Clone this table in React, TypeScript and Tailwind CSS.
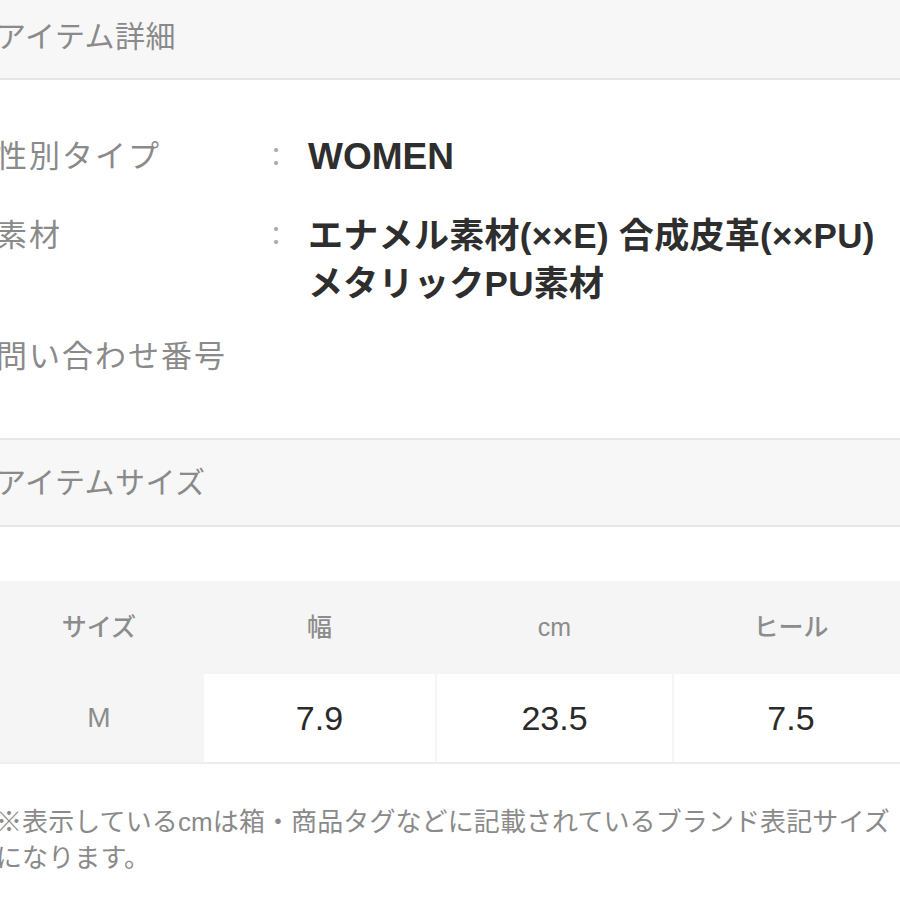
import React from "react";

const font = { fontFamily: '"Liberation Sans", "Noto Sans CJK JP", sans-serif' };

export default function App() {
  return (
    <div className="w-[900px] h-[900px] overflow-hidden bg-white" style={font}>
      <div className="-ml-[4px] w-[912px]">
        {/* Header 1 */}
        <div className="h-[80px] bg-[#f7f7f7] border-b-2 border-[#e6e6e6] flex items-center pb-[4px]">
          <span className="text-[30px] text-[#8a8a8a] leading-none tracking-[0.5px]">アイテム詳細</span>
        </div>

        {/* Detail rows */}
        <div className="pt-[53px] pb-[57px]">
          <div className="flex leading-[48px]">
            <div className="w-[264px] text-[31px] text-[#8a8a8a] tracking-[2px]">性別タイプ</div>
            <div className="w-[32px] text-[26px] text-[#aaaaaa] text-center">：</div>
            <div className="ml-[16px] text-[37px] font-semibold text-[#2e2e2e]">WOMEN</div>
          </div>
          <div className="flex leading-[48px] mt-[31px]">
            <div className="w-[264px] text-[31px] text-[#8a8a8a] tracking-[2px]">素材</div>
            <div className="w-[32px] text-[26px] text-[#aaaaaa] text-center">：</div>
            <div className="ml-[16px] text-[35px] font-semibold text-[#2e2e2e] whitespace-nowrap tracking-[0.3px]">
              エナメル素材(××E) 合成皮革(××PU)
              <br />
              メタリックPU素材
            </div>
          </div>
          <div className="flex leading-[48px] mt-[25px]">
            <div className="w-[264px] text-[31px] text-[#8a8a8a] tracking-[2px]">問い合わせ番号</div>
          </div>
        </div>

        {/* Header 2 */}
        <div className="h-[89px] bg-[#f7f7f7] border-y-2 border-[#e6e6e6] flex items-center">
          <span className="text-[30px] text-[#8a8a8a] leading-none tracking-[0.5px]">アイテムサイズ</span>
        </div>

        {/* Table */}
        <div className="mt-[54px] bg-[#f5f5f5] grid grid-cols-[206px_231px_235px_234px] gap-x-[2px] border-b-2 border-[#ededed]">
          {["サイズ", "幅", "cm", "ヒール"].map((h) => (
            <div key={h} className="h-[93px] flex items-center justify-center text-[25px] font-medium text-[#8c8c8c]">
              {h}
            </div>
          ))}
          <div className="h-[88px] flex items-center justify-center text-[28px] text-[#8c8c8c]">M</div>
          {["7.9", "23.5", "7.5"].map((v) => (
            <div key={v} className="h-[88px] bg-white flex items-center justify-center text-[34px] text-[#2a2a2a]">
              {v}
            </div>
          ))}
        </div>

        {/* Note */}
        <div className="mt-[40px] text-[26px] leading-[36px] text-[#8a8a8a] whitespace-nowrap tracking-[0.1px]">
          ※表示しているcmは箱・商品タグなどに記載されているブランド表記サイズ
          <br />
          になります。
        </div>
      </div>
    </div>
  );
}
